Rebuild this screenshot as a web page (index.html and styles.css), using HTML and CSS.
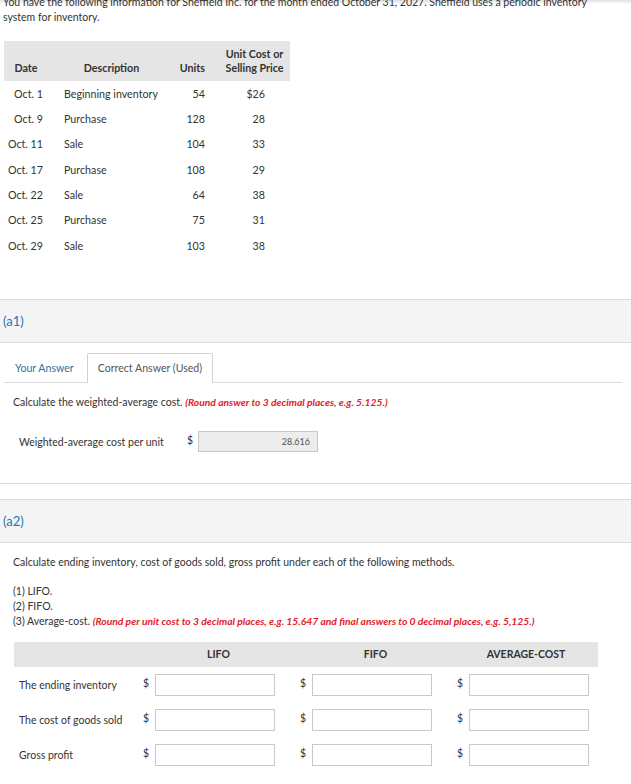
FILE: index.html
```html
<!DOCTYPE html>
<html lang="en">
<head>
<meta charset="utf-8">
<title>Sheffield Inc. inventory</title>
<link rel="stylesheet" href="styles.css">
</head>
<body>
<div class="topshade"></div>
<p class="intro">You have the following information for Sheffield Inc. for the month ended October 31, 2027. Sheffield uses a periodic inventory system for inventory.</p>

<table class="inv">
  <thead>
    <tr>
      <th class="c-date">Date</th>
      <th class="c-desc">Description</th>
      <th class="c-units">Units</th>
      <th class="c-cost">Unit Cost or<br>Selling Price</th>
    </tr>
  </thead>
  <tbody>
    <tr><td class="c-date">Oct. 1</td><td class="c-desc">Beginning inventory</td><td class="c-units">54</td><td class="c-cost">$26</td></tr>
    <tr><td class="c-date">Oct. 9</td><td class="c-desc">Purchase</td><td class="c-units">128</td><td class="c-cost">28</td></tr>
    <tr><td class="c-date">Oct. 11</td><td class="c-desc">Sale</td><td class="c-units">104</td><td class="c-cost">33</td></tr>
    <tr><td class="c-date">Oct. 17</td><td class="c-desc">Purchase</td><td class="c-units">108</td><td class="c-cost">29</td></tr>
    <tr><td class="c-date">Oct. 22</td><td class="c-desc">Sale</td><td class="c-units">64</td><td class="c-cost">38</td></tr>
    <tr><td class="c-date">Oct. 25</td><td class="c-desc">Purchase</td><td class="c-units">75</td><td class="c-cost">31</td></tr>
    <tr><td class="c-date">Oct. 29</td><td class="c-desc">Sale</td><td class="c-units">103</td><td class="c-cost">38</td></tr>
  </tbody>
</table>

<div class="part part-a1">(a1)</div>

<div class="tabs">
  <div class="tab">Your Answer</div>
  <div class="tab tab-active">Correct Answer (Used)</div>
</div>

<p class="q q-a1">Calculate the weighted-average cost. <em class="hint">(Round answer to 3 decimal places, e.g. 5.125.)</em></p>

<div class="wa-row">
  <span class="wa-label">Weighted-average cost per unit</span>
  <span class="dollar">$</span>
  <span class="field field-filled">28.616</span>
</div>

<div class="divider"></div>

<div class="part part-a2">(a2)</div>

<p class="q q-a2">Calculate ending inventory, cost of goods sold, gross profit under each of the following methods.</p>
<p class="q methods">(1) LIFO.<br>(2) FIFO.<br>(3) Average-cost. <em class="hint">(Round per unit cost to 3 decimal places, e.g. 15.647 and final answers to 0 decimal places, e.g. 5,125.)</em></p>

<div class="grid">
  <div class="gh gh-blank"></div>
  <div class="gh">LIFO</div>
  <div class="gh">FIFO</div>
  <div class="gh">AVERAGE-COST</div>

  <div class="gl">The ending inventory</div>
  <div class="gc"><span class="dollar">$</span><span class="field"></span></div>
  <div class="gc"><span class="dollar">$</span><span class="field"></span></div>
  <div class="gc"><span class="dollar">$</span><span class="field"></span></div>

  <div class="gl">The cost of goods sold</div>
  <div class="gc"><span class="dollar">$</span><span class="field"></span></div>
  <div class="gc"><span class="dollar">$</span><span class="field"></span></div>
  <div class="gc"><span class="dollar">$</span><span class="field"></span></div>

  <div class="gl">Gross profit</div>
  <div class="gc"><span class="dollar">$</span><span class="field"></span></div>
  <div class="gc"><span class="dollar">$</span><span class="field"></span></div>
  <div class="gc"><span class="dollar">$</span><span class="field"></span></div>
</div>
</body>
</html>
```

FILE: styles.css
```css
html, body {
  margin: 0;
  padding: 0;
  background: #fff;
}
body {
  font-family: Lato, "Open Sans", "Liberation Sans", sans-serif;
  font-size: 10.5px;
  color: #333;
  overflow: hidden;
}
.topshade {
  position: fixed;
  left: 0;
  top: 0;
  right: 0;
  height: 4px;
  background: linear-gradient(rgba(0,0,0,0.12), rgba(0,0,0,0));
}
.intro {
  margin: -5px 0 0 0;
  padding-left: 3px;
  width: 612px;
  line-height: 15px;
}

/* inventory table */
.inv {
  margin: 16px 0 0 4px;
  border-collapse: collapse;
  table-layout: fixed;
  width: 286px;
  font-size: 10.7px;
}
.inv th, .inv td {
  box-sizing: border-box;
  padding: 0;
  white-space: nowrap;
}
.inv thead th {
  background: #e5e5e5;
  font-weight: 700;
  line-height: 14px;
  padding-top: 6px;
  padding-bottom: 6px;
  vertical-align: bottom;
  text-align: center;
}
.inv tbody td {
  height: 25.33px;
  line-height: 14px;
  vertical-align: middle;
}
.inv .c-date { width: 48px; }
.inv .c-desc { width: 119px; }
.inv .c-units { width: 41px; }
.inv .c-cost { width: 78px; }
.inv th.c-date { padding-right: 4px; }
.inv td.c-date { text-align: right; padding-right: 9px; }
.inv td.c-desc { text-align: left; padding-left: 12px; }
.inv td.c-units { text-align: right; padding-right: 7px; }
.inv th.c-units { text-align: right; padding-right: 7px; }
.inv td.c-cost { text-align: right; padding-right: 25px; }
.inv th.c-cost { padding-left: 7px; }

/* part headers */
.part {
  background: #f4f4f4;
  border-top: 1px solid #dcdcdc;
  border-bottom: 1px solid #dcdcdc;
  height: 42px;
  line-height: 42px;
  padding-left: 3px;
  font-size: 13px;
  color: #2a77b3;
}
.part-a1 { margin-top: 41px; }
.part-a2 { margin-top: 15px; }

/* tabs */
.tabs {
  display: flex;
  gap: 2px;
  margin: 10px 9px 0 4px;
  border-bottom: 1px solid #dcdcdc;
  height: 29px;
  font-size: 10.6px;
}
.tab {
  height: 28px;
  line-height: 28px;
  padding: 0 10px;
  border: 1px solid transparent;
  border-bottom: none;
  color: #2f6f9f;
}
.tab-active {
  border-color: #d2d2d2;
  background: #fff;
  height: 29px;
  color: #555;
  border-radius: 2px 2px 0 0;
}

/* questions */
.q {
  margin: 0;
  padding-left: 13px;
  line-height: 15px;
}
.q-a1 { margin-top: 12px; }
.q-a2 { margin-top: 12px; }
.methods { margin-top: 14px; }
.hint {
  color: #e3202b;
  font-weight: 700;
  font-style: italic;
  font-size: 10.3px;
}

.wa-row {
  display: flex;
  align-items: center;
  margin-top: 21px;
  padding-left: 19px;
}
.wa-label { width: 168px; }
.dollar {
  width: 6px;
  margin-right: 5px;
  line-height: 12px;
  margin-top: -4px;
}
.field {
  display: block;
  box-sizing: border-box;
  width: 120px;
  height: 22px;
  border: 1px solid #c9c9c9;
  background: #fff;
}
.field-filled {
  height: 21px;
  background: #ededed;
  border-color: #c8c8c8;
  font-size: 9px;
  color: #555;
  text-align: right;
  line-height: 19px;
  padding-right: 7px;
}

.divider {
  margin-top: 31px;
  border-top: 1px solid #dcdcdc;
}

/* results grid */
.grid {
  display: grid;
  grid-template-columns: 126px 157px 157px 144px;
  margin: 13px 0 0 14px;
}
.gh {
  background: #e5e5e5;
  height: 25px;
  line-height: 25px;
  text-align: center;
  font-weight: 700;
  color: #333;
}
.gl {
  display: flex;
  align-items: center;
  padding-left: 5px;
  padding-top: 7px;
  padding-bottom: 6px;
  white-space: nowrap;
}
.gc {
  display: flex;
  align-items: center;
  padding: 7px 0 6px 3px;
}
.gc .dollar { margin-right: 6px; }
```
